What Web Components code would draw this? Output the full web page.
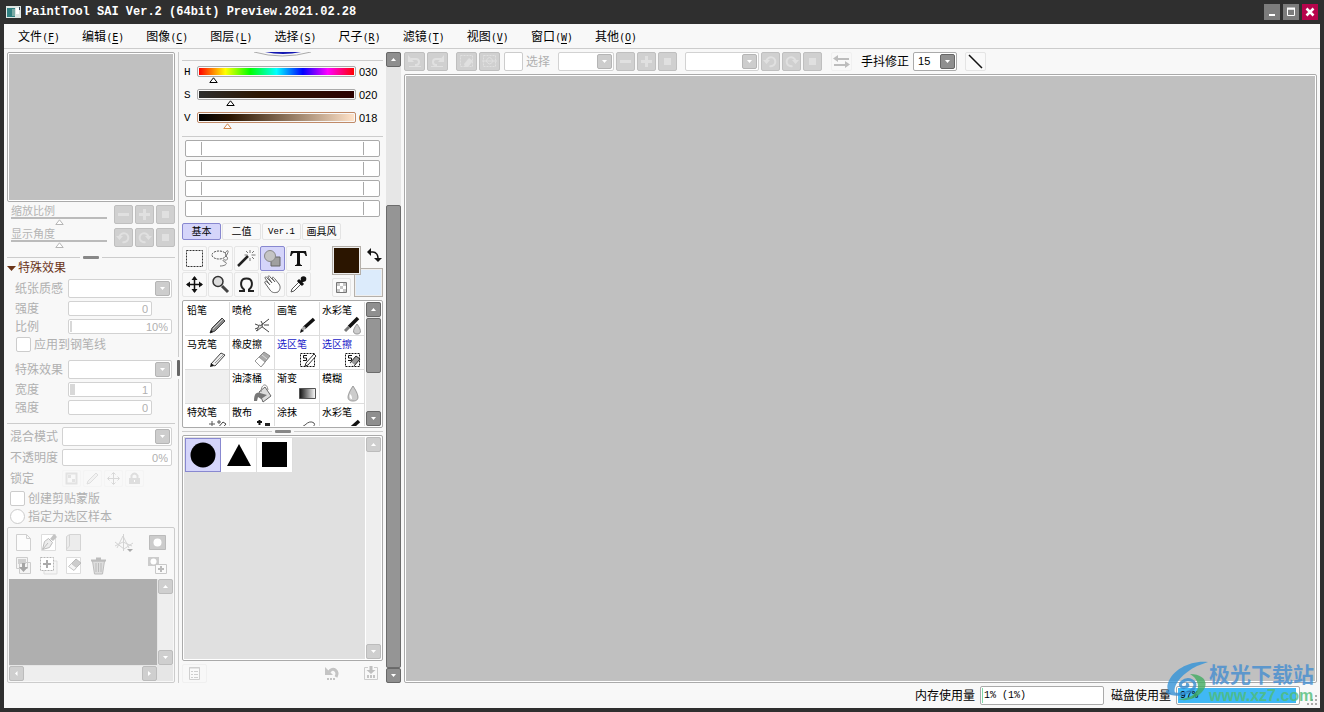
<!DOCTYPE html>
<html lang="zh-CN">
<head>
<meta charset="utf-8">
<title>PaintTool SAI Ver.2</title>
<style>
html, body { margin: 0; height: 100%; }
body { background: #2f2f2f; color: #000; font: 12px/14px "Liberation Sans", "Noto Sans CJK SC", sans-serif; }
</style>
</head>
<body>
<sai-app></sai-app>
<script>
const ICONS = {
  minus: [19, '<path d="M4 9.500h11" stroke="var(--ink)" stroke-width="3"/>'],
  plus: [19, '<path d="M4 9.500h11M9.500 4v11" stroke="var(--ink)" stroke-width="3"/>'],
  stop: [19, '<path d="M6 6h7v7H6z" fill="var(--ink)"/>'],
  ccw: [19, '<path d="M5.500 8.500a4.500 4.500 0 1 1 3 5.500" fill="none" stroke="var(--ink)" stroke-width="2"/><path d="M2 8h7l-3.500 4z" fill="var(--ink)"/>'],
  cw: [19, '<path d="M13.500 8.500a4.500 4.500 0 1 0-3 5.500" fill="none" stroke="var(--ink)" stroke-width="2"/><path d="M17 8h-7l3.500 4z" fill="var(--ink)"/>'],
  undo: [19, '<path d="M6 7h5a3 3 0 0 1 0 6h-1" fill="none" stroke="var(--ink)" stroke-width="2"/><path d="M3 3v7h6z" fill="var(--ink)"/><path d="M4 14.500h12" stroke="var(--ink)"/>'],
  redo: [19, '<path d="M13 7H8a3 3 0 0 0 0 6h1" fill="none" stroke="var(--ink)" stroke-width="2"/><path d="M16 3v7h-6z" fill="var(--ink)"/><path d="M3 14.500h12" stroke="var(--ink)"/>'],
  deselect: [19, '<path d="M3.500 3.500h12v11h-12z" fill="none" stroke="var(--ink)" stroke-dasharray="2 1"/><path d="M7 12l5-6 4 3-5 6H8z" fill="var(--ink)"/>'],
  invert: [19, '<path d="M3.500 3.500h12v11h-12z" fill="none" stroke="var(--ink)" stroke-dasharray="2 1"/><path d="M2 9h15M6 9q3.500-7 7 0q-3 6-7 0" fill="none" stroke="var(--ink)"/>'],
  swap: [19, '<path d="M2 6h4V3L1 6.500 6 10V8h11V6zM17 12h-4V9l5 3.500-5 3.500v-2H2v-2z" fill="#bdbdbd"/>'],
  line: [19, '<path d="M3 3l13 13" stroke="#111" stroke-width="1.500"/>'],
  min: [16, '<path d="M5 10h6v2H5z" fill="#fff"/>'],
  max: [16, '<path d="M4.500 5h7v6.500h-7z" fill="none" stroke="#fff"/><path d="M4 4.500h8" stroke="#fff" stroke-width="2"/>'],
  close: [16, '<path d="M4.500 4.500l7 7m0-7l-7 7" stroke="#fff" stroke-width="2.500"/>'],
  marquee: [25, '<path d="M4.500 4.500h16v16h-16z" fill="none" stroke="#333" stroke-dasharray="2 1"/>'],
  lasso: [25, '<ellipse cx="11" cy="9" rx="7" ry="4" fill="none" stroke="#444" stroke-dasharray="2 1"/><path d="M17 7c4-5 4-1 1 3 3 2 1 5-1 4s-3 1 0 2 1 4-5 4" fill="none" stroke="#777"/>'],
  wand: [25, '<path d="M4 20L14 10" stroke="#222" stroke-width="2.500"/><path d="M16 4v3m0 5v3M10.500 9h3m4 0h4M12 5l2 2m4 4l2 2m0-8l-2 2" stroke="#777"/>'],
  shape: [25, '<path d="M11 11h9v9h-9z" fill="#a0a0a0" stroke="#666"/><circle cx="10" cy="10" r="5.500" fill="#c4c4c4" stroke="#888"/>'],
  type: [25, '<path d="M5 5h15l1 5h-1.500c-.5-2.500-1.500-3-3.500-3h-2v10c0 1.500 1 2 2 2v1H9v-1c1.500 0 2-.5 2-2V7H9c-2 0-3 .5-3.500 3H4z" fill="#111"/>'],
  move: [25, '<path d="M5 12.500h15M12.500 5v15" stroke="#111" stroke-width="1.500"/><path d="M12.500 4l-3 4h6zM12.500 21l-3-4h6zM4 12.500l4-3v6zM21 12.500l-4-3v6z" fill="#111"/>'],
  zoom: [25, '<circle cx="10" cy="9.500" r="5" fill="#ddd" stroke="#333" stroke-width="1.500"/><path d="M14 14l6 6" stroke="#444" stroke-width="3"/>'],
  rotate: [25, '<path d="M5 19h5v-1.500c-4-3-4.500-11 2.500-11s6.500 8 2.500 11V19h5" fill="none" stroke="#222" stroke-width="2"/>'],
  hand: [25, '<path d="M10 18L5 11c-1-2 1-2 2-1l3 3-5-7c0-2 2-1 2 0l5 5-4-6c0-2 2-1 2 0l5 5-3-4c1-2 2 0 3 1l4 5c2 3 1 6-1 8-3 1-6 1-8-2z" fill="#fff" stroke="#666"/>'],
  dropper: [25, '<path d="M5 20l1-3 7-7 2 2-7 7z" fill="#fff" stroke="#555"/><path d="M12 8l5 5M14 11l4-4" stroke="#111" stroke-width="3"/><circle cx="17.500" cy="7" r="2.800" fill="#111"/>'],
  checker: [19, '<path d="M4.500 4.500h10v10h-10z" fill="#fff" stroke="#777"/><path d="M5 5h3v3H5zM11 5h3v3h-3zM8 8h3v3H8zM5 11h3v3H5zM11 11h3v3h-3z" fill="#c8c8c8"/>'],
  exchange: [19, '<path d="M6 6h3c3 0 5 3 5 6v1" fill="none" stroke="#111" stroke-width="1.500"/><path d="M7 2v8L3 6zM10 12h8l-4 4z" fill="#111"/>'],
  lockpix: [17, '<path d="M3.500 3.500h10v10h-10z" fill="none" stroke="#e2e2e2" stroke-width="2"/><path d="M5 5h3v3H5zM9 9h3v3H9z" fill="#e2e2e2"/>'],
  lockpen: [17, '<path d="M3 14l1-3 8-8 2 2-8 8z" fill="#f2f2f2" stroke="#dedede"/>'],
  lockmove: [17, '<path d="M3 8.500h11M8.500 3v11M6.500 4.500l2-2 2 2m-4 8l2 2 2-2m-6-6l-2 2 2 2m8-4l2 2-2 2" fill="none" stroke="#d8d8d8"/>'],
  lock: [17, '<path d="M5.500 8V5.500q3-4 6 0V8" fill="none" stroke="#dedede" stroke-width="2"/><path d="M3 8h11v6H3z" fill="#dedede"/><path d="M8 10h1v2H8z" fill="#fff"/>'],
  newlayer: [19, '<path d="M2.500 1.500h10l4 4v12h-14zM12.500 1.500v4h4" fill="#fcfcfc" stroke="#d0d0d0"/>'],
  penlayer: [19, '<path d="M2.500 1.500h14v16h-14z" fill="#fff" stroke="#ddd"/><path d="M3.500 16.500l2-8 4-3 4 4-3 5z" fill="#ececec" stroke="#bbb"/><path d="M4 16l5-6" stroke="#bbb"/><path d="M11 6l4-5 3 3-4 4z" fill="#c4c4c4"/>'],
  folder: [19, '<path d="M2.500 3.500l3-2h11v16h-14z" fill="#ececec" stroke="#d4d4d4"/><path d="M5.500 2v11l-3 3" fill="none" stroke="#d4d4d4"/>'],
  ruler: [19, '<path d="M9.500 1v17M1 13l8-4 9 4M1 9l9 7 9-6M3 15l6-12 6 12" fill="none" stroke="#d3d3d3"/><path d="M13 16h6l-3 3z" fill="#aaa"/>'],
  mask: [19, '<path d="M1.500 2.500h16v14h-16z" fill="#ccc" stroke="#bbb"/><circle cx="9.500" cy="9.500" r="4" fill="#fff"/>'],
  merge: [19, '<path d="M2.500 1.500h11v11h-11zM5.500 6.500h11v11h-11z" fill="#f4f4f4" stroke="#ccc"/><path d="M4 3h8v5H4z" fill="#d0d0d0"/><path d="M8 7h3v4h3l-4.500 5L5 11h3z" fill="#a5a5a5"/>'],
  copylayer: [19, '<path d="M5 5h13v13H5z" fill="#f5f5f5" stroke="#ddd"/><path d="M1.500 1.500h13v13h-13z" fill="#fff" stroke="#b5b5b5" stroke-dasharray="2 1"/><path d="M4 8h8M8 4v8" stroke="#aaa" stroke-width="2"/>'],
  clear: [19, '<path d="M2.500 1.500h14v16h-14z" fill="#fff" stroke="#ddd"/><path d="M6 9l6-6 5 4-7 7z" fill="#ccc" stroke="#bbb"/><path d="M4.500 10.500l3-3 5 4-2.500 3z" fill="#f4f4f4" stroke="#c4c4c4"/>'],
  trash: [19, '<path d="M3.500 5l2 13h8l2-13z" fill="#ddd" stroke="#bcbcbc"/><path d="M2 4.500h15M7 2.500h5" stroke="#bcbcbc" stroke-width="2"/><path d="M7 7v9m2.500-9v9M12 7v9" stroke="#bbb"/>'],
  addmask: [19, '<path d="M0 1h11v9H0z" fill="#ccc"/><circle cx="5.500" cy="5.500" r="3" fill="#fff"/><path d="M7.500 8.500h11v9h-11z" fill="#fafafa" stroke="#c8c8c8"/><path d="M10 13h6m-3-3v6" stroke="#bbb" stroke-width="2"/>'],
  sheet: [19, '<path d="M4.500 3.500h10v12h-10z" fill="#fafafa" stroke="#cfcfcf"/><path d="M4 4h11M6 7.500h2m1 0h4m-7 3h2m1 0h4m-7 3h2m1 0h4" stroke="#cfcfcf"/>'],
  back: [19, '<path d="M6 8c4-6 10-1 7 5" fill="none" stroke="#c4c4c4" stroke-width="3"/><path d="M2 3v8h8z" fill="#c4c4c4"/><path d="M4 15h2m1 0h2m1 0h2" stroke="#c4c4c4" stroke-width="2"/>'],
  save: [19, '<path d="M7 3.500H3.500v12h13v-12H13" fill="none" stroke="#ccc"/><path d="M8.500 2h3v4h3L10 10 5.500 6h3z" fill="#bfbfbf"/><path d="M6 12.500h2m1 0h2m1 0h2" stroke="#c4c4c4" stroke-width="3"/>'],
  pencil: [19, '<path d="M2 17l2-5L14 2l3 3L7 15z" fill="#888" stroke="#444"/><path d="M5 13L15 3" stroke="#ccc"/><path d="M2 17l1-3 2 2z" fill="#111"/>'],
  airbrush: [19, '<path d="M2 8l5 2 9-7m-8 7l8 6M3 15l7-5m0-1L8 5m3 4h5M2 13l5-2" fill="none" stroke="#444"/><path d="M6 9l4 1-6 5z" fill="#ddd" stroke="#666"/>'],
  brush: [19, '<path d="M6 12L16 3" stroke="#111" stroke-width="3.500"/><path d="M4 14l3-3" stroke="#aaa" stroke-width="3"/><path d="M2 17l1-4 3 2z" fill="#111"/>'],
  water: [19, '<path d="M6 11L15 2" stroke="#111" stroke-width="3.500"/><path d="M2 15l4-4" stroke="#777" stroke-width="3"/><path d="M14 8c-6 8-3 10 0 10s6-2 0-10z" fill="#ccc" stroke="#999"/>'],
  marker: [19, '<path d="M3 14L13 3l4 2L7 16z" fill="#eee" stroke="#444"/><path d="M2 17l1-4 3 3z" fill="#111"/><path d="M7 13l8-8" stroke="#999"/>'],
  eraser: [19, '<path d="M2 11L11 2l6 4-9 11z" fill="#aaa" stroke="#888"/><path d="M2 11l4-4 6 5-4 5z" fill="#fff" stroke="#999"/><path d="M9 5l5 4" stroke="#ddd"/>'],
  selpen: [19, '<path d="M2.500 3.500h14v13h-14z" fill="none" stroke="#111" stroke-dasharray="2 1"/><path d="M9 5.500H5.500v2.500H8.500v2.500H5" fill="none" stroke="#111"/><path d="M7 16l1-3 8-9 2 2-8 9z" fill="#fff" stroke="#333"/>'],
  selerase: [19, '<path d="M2.500 3.500h14v13h-14z" fill="none" stroke="#111" stroke-dasharray="2 1"/><path d="M9 5.500H5.500v2.500H8.500v2.500H5" fill="none" stroke="#111"/><path d="M7 13l6-7 4 3-6 7z" fill="#999" stroke="#222"/><path d="M7.500 13l3.500 2.500" stroke="#fff" stroke-width="2"/>'],
  bucket: [19, '<path d="M6 8l6-5 6 9-8 6z" fill="#ddd" stroke="#666"/><path d="M1 17c0-7 2-9 6-8l7 2-6 4-3-2-1 4z" fill="#777"/><path d="M8 8c0-8 6-10 7-2" fill="none" stroke="#888"/>'],
  gradient: [19, '<defs><linearGradient id="g"><stop stop-color="#111"/><stop offset="1" stop-color="#fff"/></linearGradient></defs><path d="M1.500 4.500h16v10h-16z" fill="url(#g)" stroke="#555"/>'],
  drop: [19, '<path d="M10 2c-8 12-5 15 0 15s8-3 0-15z" fill="#ccc" stroke="#999"/><path d="M7 10c-1 3 0 5 2 5 0-2 0-3-2-5z" fill="#fff"/>'],
  effect: [19, '<path d="M1 6h6M4 3v6M9 4h4m-2-2v4" stroke="#555"/><path d="M8 12l7-8 3 2-8 9z" fill="#fff" stroke="#444"/>'],
  scatter: [19, '<path d="M4 4h5M6.500 2v5" stroke="#111" stroke-width="2"/><path d="M12 5h5v5h-5z" fill="#222"/>'],
  smear: [19, '<path d="M3 12q-1-3 4-5 5-5 9-2 2 3-3 4-4 5-6 3z" fill="#fff" stroke="#555"/>'],
  circle: [34, '<circle cx="17" cy="17" r="12.500"/>'],
  triangle: [34, '<path d="M17 6l12 22H5z"/>'],
  square: [34, '<path d="M4 4h25v25H4z"/>'],
  appicon: [15, '<path d="M0 1h15v12H0z" fill="#dde5e3"/><path d="M1 3h8v9H1z" fill="#2f7f80"/><path d="M6 4h3v7H6z" fill="#79aaa4"/><path d="M10 3h3v6h-3z" fill="#fff"/><path d="M13 2h1v3h-1z" fill="#345"/>']
};
const svg = (name, size) => {
  const [box, art] = ICONS[name];
  return `<svg width="${size || box}" height="${size || box}" viewBox="0 0 ${box} ${box}" aria-hidden="true">${art}</svg>`;
};
const BASE = `*,*::before,*::after{box-sizing:border-box}:host{display:block;box-sizing:border-box}
svg{display:block;flex:none}button,input,select{font:inherit;color:inherit;margin:0;padding:0;border:0;opacity:1;min-width:0}label{white-space:nowrap}`;
function define(tag, css, html) {
  customElements.define(tag, class extends HTMLElement {
    constructor() { super(); this.attachShadow({ mode: 'open' }); }
    connectedCallback() {
      const a = (n, d = '') => this.getAttribute(n) ?? d;
      this.shadowRoot.innerHTML = `<style>${BASE}${css}</style>${html(a, this)}`;
    }
  });
}

/* Upward triangle used as the thumb of every slider. */
const THUMB = c => `url("data:image/svg+xml,%3Csvg xmlns='http://www.w3.org/2000/svg' width='9' height='6'%3E%3Cpath d='M.8 5.500h7.400L4.500 .8z' fill='white' stroke='%23${c}'/%3E%3C/svg%3E")`;

/* A push button with an icon; kind selects its surface. */
define('sai-button', `
:host{width:19px;height:19px;flex:none;--ink:#e0e0e0}
:host([wide]){width:21px}
button{width:100%;height:100%;display:flex;align-items:center;justify-content:center;background:none;border-radius:2px;overflow:hidden}
:host([kind=grey]) button{background:#d0d0d0;border:1px solid #bfbfbf}
:host([kind=flat]) button{border:1px solid #e4e4e4;background:#f9f9f9}
:host([kind=faint]) button{border:1px solid #f0f0f0}
:host([kind=win]) button{background:#7c7c7c;border-radius:0}
:host([kind=close]) button{background:#b8044c;border-radius:0}
:host([kind=win]),:host([kind=close]){width:16px;height:16px}
:host([kind=tool]){width:25px;height:25px}
:host([kind=tool]) button{border:1px solid #e6e6e6;background:#f9f9f9}
:host([kind=tool][on]) button{background:#d5d5fa;border-color:#8888d0}
:host([kind=shape]){width:36px;height:34px}
:host([kind=shape]) button{background:#fff;border-right:1px solid #ddd;border-radius:0}
:host([kind=shape][on]) button{background:#d5d5fa;border:1px solid #8888d0}
:host([kind=lock]){width:19px;height:17px}
:host([kind=lock]) button{border:1px solid #f4f4f4}
:host([kind=foot]){width:25px;height:19px}
:host([kind=foot]) button{border:1px solid #f0f0f0}`,
a => `<button type="button" aria-label="${a('label', a('icon'))}" ${a('off') ? 'disabled' : ''}>${svg(a('icon'))}</button>`);

/* Drop-down with a square arrow at its right end. */
define('sai-combo', `
:host{height:19px;display:flex;gap:0;align-items:center;color:#b0b0b0}
label{flex:none;width:var(--label,0)}
label:empty{display:none}
div{flex:1;min-width:0;height:100%;display:grid;grid-template:15px/1fr 15px;padding:1px;align-items:center;border:1px solid #d2d2d2;border-radius:2px;background:#fff}
select{grid-area:1/1/2/3;width:100%;height:15px;appearance:none;background:none;padding-left:3px;font-size:11px;line-height:15px}
i{grid-area:1/2;width:15px;height:15px;border:1px solid #b5b5b5;border-radius:2px;background:#cdcdcd;display:flex;align-items:center;justify-content:center;pointer-events:none}
:host([live]){color:#000}:host([live]) div{border-color:#aaa}:host([live]) i{background:#8f8f8f;border-color:#666}`,
a => `<label for="s">${a('label')}</label><div><select id="s" aria-label="${a('label', a('name'))}" ${a('value') ? '' : 'disabled'}><option>${a('value')}</option></select><i><svg width="5" height="3"><path d="M0 0h5L2.500 3z" fill="#fff"/></svg></i></div>`);

/* Labelled number box whose background shows the amount. */
define('sai-field', `
:host{height:15px;display:flex;align-items:center;color:#b0b0b0}
:host([tall]){height:17px}
label{flex:none;width:var(--label)}
input{flex:1;height:100%;border:1px solid #d2d2d2;border-radius:2px;text-align:right;padding-right:3px;font-size:11px;background:linear-gradient(#d8d8d8,#d8d8d8) 1px 1px/var(--fill,0) 11px no-repeat #fff}
:host([short]){padding-right:20px}`,
a => `<label for="n">${a('label')}</label><input id="n" type="text" value="${a('value')}" disabled>`);

define('sai-check', `
:host{height:15px;display:flex;align-items:center;gap:3px;color:#b0b0b0}
:host([big]){height:19px}
input{appearance:none;width:15px;height:15px;flex:none;border:1px solid #ccc;border-radius:2px;background:#fff}
input[type=radio]{border-radius:50%}
:host([big]) input{width:19px;height:19px}`,
a => `<input id="c" type="${a('type', 'checkbox')}" disabled><label for="c">${a('label')}</label>`);

/* View slider: caption resting on a thin line, triangular thumb below. */
define('sai-view-slider', `
:host{flex:1;height:19px;color:#b4b4b4;font-size:11px;line-height:12px}
div{display:grid;grid-template-rows:12px 2px;padding-left:4px}
input{appearance:none;width:96px;height:2px;background:#bbb}
input::-webkit-slider-thumb{appearance:none;width:9px;height:6px;margin-top:8px;background:${THUMB('b5b5b5')}}`,
a => `<div><label for="v">${a('label')}</label><input id="v" type="range" min="0" max="100" value="50" disabled></div>`);

define('sai-color-slider', `
:host{height:11px;display:flex;align-items:center;padding-left:2px;font-size:11px;--edge:#aaa}
label{width:13px;font-family:"Liberation Mono",monospace}
input{appearance:none;width:159px;height:11px;border:1px solid var(--edge);border-radius:2px;padding:1px;background:var(--ramp) content-box #fff}
input::-webkit-slider-thumb{appearance:none;width:9px;height:6px;margin:16px 0 0 -2px;background:${THUMB('000')}}
:host([warm]) input::-webkit-slider-thumb{background:${THUMB('d08850')}}
output{padding-left:3px}`,
a => `<label for="h">${a('label')}</label><input id="h" type="range" min="0" max="${a('max')}" value="${a('value')}"><output for="h">${a('text')}</output>`);

define('sai-scroll', `
:host{display:flex;flex-direction:column;width:15px;background:#e6e6e6;--face:#8f8f8f;--edge:#686868}
:host([row]){flex-direction:row;width:auto;height:15px}
:host([off]){--face:#cfcfcf;--edge:#bcbcbc;background:#eee}
button{width:15px;height:15px;flex:none;display:flex;align-items:center;justify-content:center;background:var(--face);border:1px solid var(--edge);border-radius:2px}
div{flex:1;min-height:0}
i{display:block;height:var(--size,0);background:#959595;border:1px solid #6c6c6c;border-radius:2px}
:host([off]) i{display:none}
s{display:block;height:var(--start,0)}`,
a => {
  const up = a('row') ? 'M3.500 0v5L1 2.500z' : 'M0 4h5L2.500 1z', dn = a('row') ? 'M1 0v5l3-2.500z' : 'M0 1h5L2.500 4z';
  const b = (d, l) => `<button type="button" aria-label="${l}"><svg width="5" height="5"><path d="${d}" fill="#fff"/></svg></button>`;
  return b(up, 'back') + '<div><s></s><i></i></div>' + b(dn, 'forward');
});

/* Splitter line with a centred grip. */
define('sai-sash', `
:host{display:flex;align-items:center;justify-content:center;gap:3px;height:3px}
b{flex:1;height:1px;background:#ccc}i{width:16px;height:3px;border-radius:1px;background:#888}
:host([upright]){height:auto;width:7px;flex-direction:column}
:host([upright]) b{width:1px;height:auto}
:host([upright]) i{width:3px;height:16px;background:#666}`,
() => '<b></b><i></i><b></b>');

define('sai-menu-bar', `
nav{height:25px;border-bottom:1px solid #ccc;display:flex;align-items:center;gap:22px;padding:1px 0 0 14px;background:#f8f8f8}
a{color:#000;text-decoration:none;white-space:nowrap}
span{font:10px "DejaVu Sans Mono",monospace}u{text-underline-offset:2px}`,
() => '<nav>' + [['文件', 'F'], ['编辑', 'E'], ['图像', 'C'], ['图层', 'L'], ['选择', 'S'], ['尺子', 'R'], ['滤镜', 'T'], ['视图', 'V'], ['窗口', 'W'], ['其他', 'O']]
  .map(([t, k]) => `<a href="#${k}">${t}<span>(<u>${k}</u>)</span></a>`).join('') + '</nav>');

define('sai-title', `
header{height:24px;display:flex;align-items:center;gap:4px;padding:0 2px 0 2px;color:#fff}
h1{margin:0;flex:1;font:bold 12px/14px "Liberation Mono",monospace}
div{display:flex;gap:3px}`,
() => `<header>${svg('appicon')}<h1>PaintTool SAI Ver.2 (64bit) Preview.2021.02.28</h1><div><sai-button kind="win" icon="min"></sai-button><sai-button kind="win" icon="max"></sai-button><sai-button kind="close" icon="close"></sai-button></div></header>`);

define('sai-layers', `
:host{flex:1;min-height:0;display:flex;flex-direction:column;border:1px solid #ccc;border-radius:2px;padding:1px}
.i{display:grid;grid-template-columns:repeat(5,19px) 1fr;gap:4px 6px;padding:4px 6px 4px 5px}
.i>:nth-child(6n){justify-self:end}
.l{flex:1;min-height:0;display:grid;grid-template:1fr 15px/1fr 15px;gap:1px;background:#e6e6e6}
.l>div{background:#afafaf}`,
() => '<div class="i">' + ['newlayer', 'penlayer', 'folder', '', 'ruler', 'mask', 'merge', 'copylayer', 'clear', 'trash', '', 'addmask']
  .map(n => n ? `<sai-button icon="${n}" off="1"></sai-button>` : '<span></span>').join('') +
  '</div><div class="l"><div></div><sai-scroll off="1"></sai-scroll><sai-scroll off="1" row="1"></sai-scroll></div>');

define('sai-left', `
:host{display:flex;flex-direction:column;gap:3px;min-height:0}
.nav{height:150px;flex:none;border:1px solid #aaa;border-radius:2px;padding:1px;background:linear-gradient(#c0c0c0,#c0c0c0) content-box,#fff}
.v{display:flex;gap:2px}
.v+.v{margin-top:1px}
sai-sash{margin-top:6px}
h2{margin:0 0 1px;height:13px;font:12px/13px "Liberation Sans","Noto Sans CJK SC",sans-serif;color:#6b3418;display:flex;align-items:center;gap:2px}
.g{display:flex;flex-direction:column;gap:3px;padding:0 3px 0 8px;--label:53px}
.g+.g,.g+hr{margin-top:5px}
hr{width:100%;height:1px;border:0;margin:0;background:#ccc;flex:none}
.b{padding-left:3px;--label:52px}
.k{display:flex;align-items:center;gap:2px;color:#b0b0b0;height:17px;margin:1px 0}
.k span{width:50px}`,
() => `<div class="nav"></div>
<div class="v"><sai-view-slider label="缩放比例"></sai-view-slider><sai-button kind="grey" icon="minus"></sai-button><sai-button kind="grey" icon="plus"></sai-button><sai-button kind="grey" icon="stop"></sai-button></div>
<div class="v"><sai-view-slider label="显示角度"></sai-view-slider><sai-button kind="grey" icon="ccw"></sai-button><sai-button kind="grey" icon="cw"></sai-button><sai-button kind="grey" icon="stop"></sai-button></div>
<sai-sash></sai-sash>
<h2><svg width="9" height="5"><path d="M0 0h9L4.500 5z" fill="#6b3418"/></svg>特殊效果</h2>
<div class="g"><sai-combo label="纸张质感"></sai-combo><sai-field short label="强度" value="0"></sai-field><sai-field style="--fill:2px" label="比例" value="10%"></sai-field><sai-check style="padding-left:1px" label="应用到钢笔线"></sai-check></div>
<div class="g"><sai-combo label="特殊效果"></sai-combo><sai-field short style="--fill:5px" label="宽度" value="1"></sai-field><sai-field short label="强度" value="0"></sai-field></div>
<hr>
<div class="g b" style="margin-top:0"><sai-combo label="混合模式"></sai-combo><sai-field tall label="不透明度" value="0%"></sai-field>
<div class="k"><span>锁定</span><sai-button kind="lock" icon="lockpix"></sai-button><sai-button kind="lock" icon="lockpen"></sai-button><sai-button kind="lock" icon="lockmove"></sai-button><sai-button kind="lock" icon="lock"></sai-button></div>
<sai-check label="创建剪贴蒙版"></sai-check><sai-check type="radio" label="指定为选区样本"></sai-check></div>
<sai-layers></sai-layers>`);

define('sai-brush', `
:host{height:34px;background:#fff;border-right:1px solid #ddd;border-bottom:1px solid #ddd;overflow:hidden}
:host([empty]){background:#f0f0f0}
button{width:100%;height:33px;display:grid;grid-template:16px 17px/1fr;background:none;font-size:10px;line-height:14px;text-align:left;padding-left:2px;white-space:nowrap}
span{align-self:end}
svg{justify-self:end;align-self:end;margin-right:2px}
:host([sel]) button{color:#1a1ac8}`,
a => a('icon') ? `<button type="button"><span><slot></slot></span>${svg(a('icon'))}</button>` : '');

define('sai-tools', `
:host{display:flex;flex-direction:column;min-height:0}
hr{width:100%;height:1px;border:0;margin:3px 0 0;background:#ccc;flex:none}
.hsv{display:flex;flex-direction:column;gap:12px;padding:5px 0 10px}
.mix{display:flex;flex-direction:column;gap:3px;padding:3px 3px 0}
.mix div{height:17px;border:1px solid #aaa;border-radius:2px;background:#fff;padding:1px 15px}
.mix i{display:block;height:13px;border:solid #aaa;border-width:0 1px}
.tabs{display:flex;gap:1px;padding:6px 0}
.tabs button{width:39px;height:17px;border:1px solid #e4e4e4;border-radius:2px;background:#f9f9f9;font-size:10px;line-height:14px;white-space:nowrap}
.tabs .on{background:#d5d5fa;border-color:#8888d0}
.tabs .m{font:9px "Liberation Mono",monospace}
.t{display:flex;justify-content:space-between;height:51px}
.t>div:first-child{display:grid;grid-template-columns:repeat(5,25px);gap:1px;align-content:start}
.c{display:grid;grid-template:repeat(51,1px)/repeat(51,1px)}
.fg,.bg{border:1px solid #b5b0aa;box-shadow:inset 0 0 0 1px #eee}
.fg{grid-area:1/1/30/30;background:#2b1500;z-index:1}
.bg{grid-area:23/23/52/52;background:#dcebfb}
.x{grid-area:1/33/20/52}.q{grid-area:33/1/52/20}
.box{border:1px solid #aaa;border-radius:2px;display:flex;padding:1px;gap:1px;background:#fff}
.br{margin-top:3px;height:128px;flex:none}
.bs{flex:1;display:grid;grid-template-columns:repeat(4,1fr);grid-auto-rows:34px;overflow:hidden;padding-left:1px}
.sh{flex:1;min-height:0}
.ss{flex:1;background:#e0e0e0;display:flex;align-items:flex-start;padding:1px}
sai-sash{margin:2px 0;flex:none}
.f{display:flex;padding-top:3px;justify-content:space-between;flex:none}
.f div{display:flex;gap:19px;padding-right:3px}`,
() => `<svg width="201" height="5" viewBox="0 0 201 5"><path d="M72 0q28 8 57 0" fill="none" stroke="#aaa"/><path d="M83 0q18 4 36 0z" fill="#1418b0"/></svg>
<hr>
<div class="hsv">
<sai-color-slider label="H" max="360" value="30" text="030" style="--ramp:linear-gradient(90deg,red,#ff0 17%,#0f0 33%,#0ff 50%,#00f 67%,#f0f 83%,red)"></sai-color-slider>
<sai-color-slider label="S" max="100" value="20" text="020" style="--ramp:linear-gradient(90deg,#2e2e2e,#2c1600 40%,#2c0000)"></sai-color-slider>
<sai-color-slider warm label="V" max="100" value="18" text="018" style="--edge:#c08a68;--ramp:linear-gradient(90deg,#000,#2b1500 20%,#ffe2c8)"></sai-color-slider>
</div>
<hr>
<div class="mix"><div><i></i></div><div><i></i></div><div><i></i></div><div><i></i></div></div>
<div class="tabs"><button type="button" class="on">基本</button><button type="button">二值</button><button type="button" class="m">Ver.1</button><button type="button">画具风</button></div>
<div class="t"><div>${['marquee', 'lasso', 'wand', 'shape', 'type', 'move', 'zoom', 'rotate', 'hand', 'dropper'].map(n => `<sai-button kind="tool" icon="${n}"${n === 'shape' ? ' on' : ''}></sai-button>`).join('')}</div>
<div class="c"><div class="fg"></div><div class="bg"></div><sai-button class="x" icon="exchange"></sai-button><sai-button class="q" kind="flat" icon="checker"></sai-button></div></div>
<div class="box br"><div class="bs">
<sai-brush icon="pencil">铅笔</sai-brush><sai-brush icon="airbrush">喷枪</sai-brush><sai-brush icon="brush">画笔</sai-brush><sai-brush icon="water">水彩笔</sai-brush>
<sai-brush icon="marker">马克笔</sai-brush><sai-brush icon="eraser">橡皮擦</sai-brush><sai-brush icon="selpen" sel>选区笔</sai-brush><sai-brush icon="selerase" sel>选区擦</sai-brush>
<sai-brush empty></sai-brush><sai-brush icon="bucket">油漆桶</sai-brush><sai-brush icon="gradient">渐变</sai-brush><sai-brush icon="drop">模糊</sai-brush>
<sai-brush icon="effect">特效笔</sai-brush><sai-brush icon="scatter">散布</sai-brush><sai-brush icon="smear">涂抹</sai-brush><sai-brush icon="brush">水彩笔</sai-brush>
</div><sai-scroll style="--start:1%;--size:59%"></sai-scroll></div>
<sai-sash></sai-sash>
<div class="box sh"><div class="ss"><sai-button kind="shape" icon="circle" on></sai-button><sai-button kind="shape" icon="triangle"></sai-button><sai-button kind="shape" icon="square"></sai-button></div><sai-scroll off="1"></sai-scroll></div>
<div class="f"><sai-button kind="foot" icon="sheet"></sai-button><div><sai-button icon="back"></sai-button><sai-button icon="save"></sai-button></div></div>`);

define('sai-canvas', `
:host{display:flex;flex-direction:column;gap:3px;min-width:0;min-height:0}
.bar{display:flex;align-items:center;height:19px;gap:8px}
.bar>div{display:flex;gap:2px;align-items:center}
.s{width:56px}.m{width:74px}.n{width:96px;--label:52px}
.w{margin:0 1px}
.view{flex:1;min-height:0;border:1px solid #aaa;border-radius:2px;padding:1px;background:linear-gradient(#c0c0c0,#c0c0c0) content-box,#fff}`,
() => {
  const g = (...n) => n.map(i => `<sai-button kind="grey" icon="${i}"></sai-button>`).join('');
  const w = (...n) => n.map(i => `<sai-button wide kind="grey" icon="${i}"></sai-button>`).join('');
  return `<div class="bar"><div>${w('undo', 'redo')}</div><div>${w('deselect', 'invert')}<sai-check big style="padding-left:2px" label="选择"></sai-check></div>
<div><sai-combo class="s" name="缩放"></sai-combo>${g('minus', 'plus', 'stop')}</div>
<div><sai-combo class="m" name="角度"></sai-combo>${g('ccw', 'cw', 'stop')}</div>
<sai-button class="w" wide kind="faint" icon="swap"></sai-button>
<sai-combo class="n" live label="手抖修正" value="15"></sai-combo>
<sai-button wide kind="flat" icon="line"></sai-button></div><div class="view"></div>`;
});

define('sai-meter', `
:host{display:flex;align-items:center;gap:5px}
div{width:124px;height:19px;border:1px solid #aaa;border-radius:2px;background:linear-gradient(var(--bar),var(--bar)) 1px 1px/var(--amount) 15px no-repeat #fff;font:10px/17px "Liberation Mono",monospace;padding-left:3px}`,
a => `<span>${a('label')}</span><div role="meter" aria-valuenow="${parseInt(a('value'))}" aria-label="${a('label')}">${a('value')}</div>`);

/* Site mark lying over the bottom right corner of the window. */
define('sai-mark', `
:host{position:absolute;right:10px;bottom:6px;display:flex;opacity:.8;pointer-events:none}
p{margin:0;color:#458ed0;font:bold 21px/24px "Noto Sans CJK SC",sans-serif}
p+p{color:#4fbd78;font:bold 16px/21px "Liberation Sans",sans-serif}`,
() => `<svg width="43" height="42" viewBox="0 0 43 42"><path d="M42 1C25-1 7 8 2 22c-3 9 5 12 8 11-5-5 3-19 21-28z" fill="#3494d8"/><path d="M24 13c14 0 20 9 12 18-6 7-17 10-24 7 10 0 19-4 20-12 0-6-3-10-8-13z" fill="#43ad62"/><path d="M0 30c8 6 23 3 28-3 4-7-6-11-12-6-4 3 0 7 4 5 3-1 2-3 0-3" fill="none" stroke="#368dd0" stroke-width="3"/></svg><div><p>极光下载站</p><p>www.xz7.com</p></div>`);

define('sai-app', `
:host{position:relative;display:flex;flex-direction:column;height:100%;padding:0 4px 4px;background:#2f2f2f}
main{flex:1;min-height:0;display:grid;grid-template:1fr/168px 7px 201px 3px 15px 3px 1fr;background:#f8f8f8;padding:3px 3px 0}
main>*{min-height:0}
sai-scroll{grid-column:5}sai-canvas{grid-column:7}
footer{height:25px;flex:none;background:#f8f8f8;display:flex;gap:7px;align-items:center;justify-content:flex-end;padding-right:3px}
footer svg{align-self:flex-end;margin-bottom:3px}`,
() => `<sai-title></sai-title><sai-menu-bar></sai-menu-bar>
<main><sai-left></sai-left><sai-sash upright></sai-sash><sai-tools></sai-tools><sai-scroll style="--start:23%;--size:77%"></sai-scroll><sai-canvas></sai-canvas></main>
<footer><sai-meter label="内存使用量" value="1% (1%)" style="--bar:#7fd8a8;--amount:1px"></sai-meter><sai-meter label="磁盘使用量" value="97%" style="--bar:#40b8f5;--amount:97%"></sai-meter>
<svg width="10" height="10"><path d="M8 0h2v2H8zM4 4h2v2H4zM8 4h2v2H8zM0 8h2v2H0zM4 8h2v2H4zM8 8h2v2H8z" fill="#aaa"/></svg></footer><sai-mark></sai-mark>`);
</script>
</body>
</html>
